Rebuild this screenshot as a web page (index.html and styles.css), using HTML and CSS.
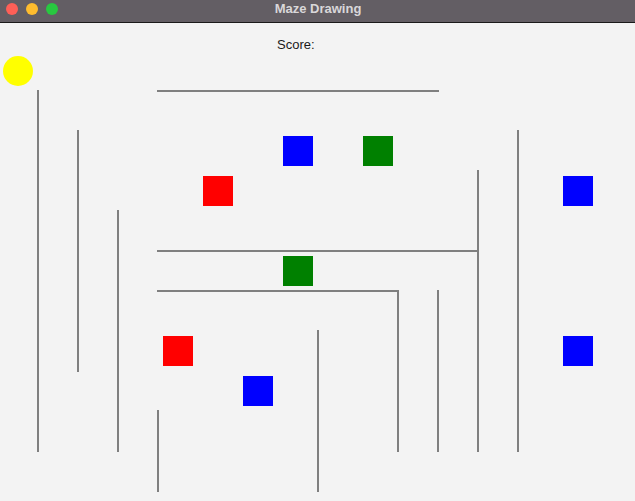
FILE: index.html
```html
<!DOCTYPE html>
<html>
<head>
<meta charset="utf-8">
<title>Maze Drawing</title>
<link rel="stylesheet" href="styles.css">
</head>
<body>
<div class="window">
  <div class="titlebar">
    <div class="lights">
      <span class="light red"></span>
      <span class="light yellow"></span>
      <span class="light green"></span>
    </div>
    <div class="title">Maze Drawing</div>
  </div>
  <div class="content">
    <svg class="maze" width="635" height="478" viewBox="0 23 635 478" xmlns="http://www.w3.org/2000/svg">
      <text class="score" x="277" y="49">Score:</text>
      <circle cx="18" cy="71" r="15" fill="#ffff00"/>
      <g class="walls" stroke="#000" stroke-opacity="0.48" stroke-width="2">
        <line x1="38" y1="90" x2="38" y2="452"/>
        <line x1="78" y1="130" x2="78" y2="372"/>
        <line x1="118" y1="210" x2="118" y2="452"/>
        <line x1="158" y1="410" x2="158" y2="492"/>
        <line x1="157" y1="91" x2="439" y2="91"/>
        <line x1="157" y1="251" x2="477" y2="251"/>
        <line x1="157" y1="291" x2="397" y2="291"/>
        <line x1="398" y1="290" x2="398" y2="452"/>
        <line x1="438" y1="290" x2="438" y2="452"/>
        <line x1="478" y1="170" x2="478" y2="452"/>
        <line x1="518" y1="130" x2="518" y2="452"/>
        <line x1="318" y1="330" x2="318" y2="492"/>
      </g>
      <rect x="283" y="136" width="30" height="30" fill="#0000ff"/>
      <rect x="363" y="136" width="30" height="30" fill="#008000"/>
      <rect x="203" y="176" width="30" height="30" fill="#ff0000"/>
      <rect x="563" y="176" width="30" height="30" fill="#0000ff"/>
      <rect x="283" y="256" width="30" height="30" fill="#008000"/>
      <rect x="163" y="336" width="30" height="30" fill="#ff0000"/>
      <rect x="563" y="336" width="30" height="30" fill="#0000ff"/>
      <rect x="243" y="376" width="30" height="30" fill="#0000ff"/>
    </svg>
  </div>
</div>
</body>
</html>
```

FILE: styles.css
```css
html, body {
  margin: 0;
  padding: 0;
  background: #f3f3f3;
  overflow: hidden;
}

.window {
  width: 635px;
  height: 501px;
  display: flex;
  flex-direction: column;
  font-family: "Liberation Sans", Arial, sans-serif;
}

.titlebar {
  height: 22px;
  background: #635e64;
  border-bottom: 1px solid #1a1a1a;
  position: relative;
  display: flex;
  align-items: flex-start;
  justify-content: center;
}

.lights {
  position: absolute;
  left: 6px;
  top: 3px;
  display: flex;
  gap: 8px;
}

.light {
  width: 12px;
  height: 12px;
  border-radius: 50%;
  display: block;
}

.light.red { background: #fe5f57; }
.light.yellow { background: #febc2e; }
.light.green { background: #28c840; }

.title {
  font-size: 13px;
  font-weight: bold;
  color: #d9d7d9;
  line-height: 18px;
  padding-left: 1px;
}

.content {
  flex: 1;
  background: #f3f3f3;
}

.maze {
  display: block;
}

.score {
  font-family: "Liberation Sans", Arial, sans-serif;
  font-size: 13px;
  fill: #1a1a1a;
}
```
